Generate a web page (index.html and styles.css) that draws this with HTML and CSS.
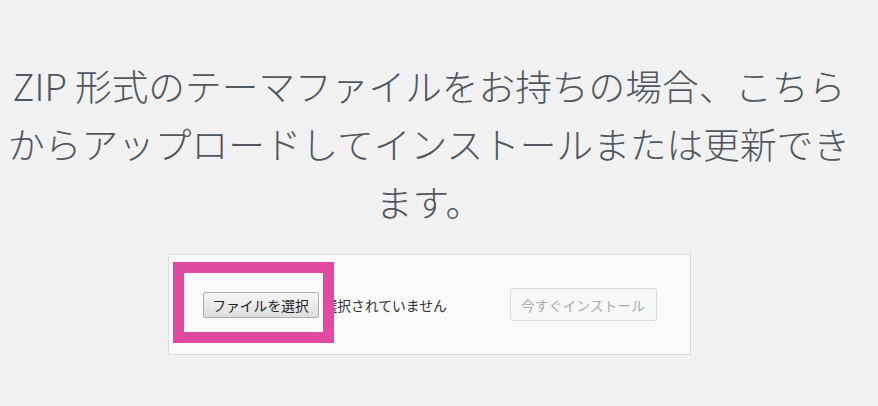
FILE: index.html
```html
<!DOCTYPE html>
<html>
<head>
    <title>テーマのアップロード</title>
    <link rel="stylesheet" href="styles.css">
</head>
<body>
    <div class="upload-theme">
        <p class="install-help">ZIP 形式のテーマファイルをお持ちの場合、こちらからアップロードしてインストールまたは更新できます。</p>

        <form class="upload-form">
            <div class="file-field">
                <button type="button" class="file-button">ファイルを選択</button>
                <span class="file-name">選択されていません</span>
            </div>
            <button type="button" class="install-button" disabled>今すぐインストール</button>

            <!-- annotation highlight -->
            <div class="highlight"></div>
        </form>
    </div>
</body>
</html>
```

FILE: styles.css
```css
body {
    margin: 0;
    background: #f1f1f1;
    font-family: "Noto Sans CJK JP", "Noto Sans", sans-serif;
    color: #50575e;
}

/* Upload panel */
.upload-theme {
    width: 858px;
    padding-top: 56px;
    display: flex;
    flex-direction: column;
    align-items: center;
}

.install-help {
    margin: 0;
    width: 858px;
    font-size: 36.7px;
    font-weight: 300;
    line-height: 58px;
    text-align: center;
}

.upload-form {
    position: relative;
    margin-top: 24px;
    width: 454px;
    padding: 33px 33px 33px 34px;
    display: flex;
    align-items: center;
    justify-content: space-between;
    background: #fafafa;
    border: 1px solid #dcdcde;
}

/* File input */
.file-field {
    display: flex;
    align-items: center;
    gap: 5px;
    font-size: 13.8px;
    color: #333;
}

.file-button {
    width: 116px;
    height: 26px;
    padding: 0;
    font-family: inherit;
    font-size: 13.8px;
    color: #222;
    background: linear-gradient(#f6f6f6, #dedede);
    border: 1px solid #adadad;
    border-radius: 2px;
}

.file-name {
    line-height: 26px;
}

/* Install button */
.install-button {
    width: 147px;
    height: 33px;
    padding: 0;
    font-family: inherit;
    font-size: 13.8px;
    color: #aaadb0;
    background: #f6f7f7;
    border: 1px solid #dcdcde;
    border-radius: 3px;
}

/* Pink annotation box */
.highlight {
    position: absolute;
    left: 4px;
    top: 7px;
    width: 139px;
    height: 59px;
    border: 11px solid #e04aa0;
}
```
